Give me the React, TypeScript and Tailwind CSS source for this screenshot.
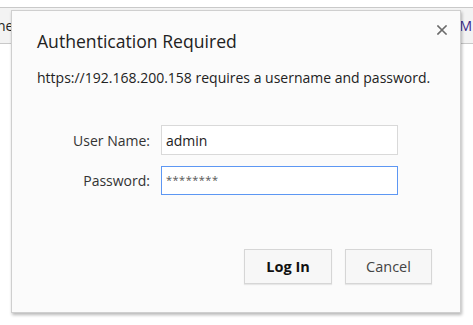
import React from "react";

const font = { fontFamily: '"Open Sans", "Noto Sans", Arial, sans-serif' };

function CloseIcon() {
  return (
    <svg width="10" height="10" viewBox="0 0 10 10" className="text-[#6b6b6b]">
      <path d="M1 1L9 9M9 1L1 9" stroke="currentColor" strokeWidth="1.6" strokeLinecap="square" />
    </svg>
  );
}

export default function App() {
  return (
    <div className="relative h-[325px] w-[473px] overflow-hidden bg-white" style={font}>
      {/* page behind the dialog */}
      <div className="mt-[7px] flex h-[37px] items-center justify-between border-y border-[#c9c9c9] bg-[#f3f3f3] text-[14px] text-[#222]">
        <span className="-ml-[3px]">ne</span>
        <span className="mr-[1px] text-[#3b2a8c]">M</span>
      </div>

      {/* dialog */}
      <div className="absolute left-[11px] top-[10px] flex h-[303px] w-[450px] flex-col border border-[#cfcfcf] bg-[#fbfbfb] pl-[25px] pr-[28px] shadow-[1px_2px_3px_rgba(0,0,0,0.28)]">
        <button className="absolute right-[12px] top-[13px] flex h-[12px] w-[12px] items-center justify-center">
          <CloseIcon />
        </button>
        <h1 className="mt-[18px] text-[17.6px] leading-[24px] text-[#222]">Authentication Required</h1>
        <p className="mt-[15px] whitespace-nowrap text-[14px] leading-[20px] text-[#222]">
          https://192.168.200.158 requires a username and password.
        </p>

        <div className="mt-[37px] grid grid-cols-[113px_237px] items-center gap-x-[11px] gap-y-[11px] text-[14px] text-[#333]">
          <label className="text-right">User Name:</label>
          <div className="flex h-[30px] items-center border border-[#d9d9d9] bg-white px-[4px] text-[#222]">admin</div>
          <label className="text-right">Password:</label>
          <div className="flex h-[29px] items-center border border-[#5d97f3] bg-white px-[4px] text-[11px] tracking-[0.5px] text-[#555]">
            ********
          </div>
        </div>

        <div className="mt-[54px] flex justify-end gap-[13px] text-[14.5px]">
          <button className="h-[35px] w-[88px] border border-[#d6d6d6] bg-[#f7f7f7] font-bold text-[#111] shadow-[0_1px_1px_rgba(0,0,0,0.08)]">
            Log In
          </button>
          <button className="h-[35px] w-[87px] border border-[#d6d6d6] bg-[#f7f7f7] text-[#444] shadow-[0_1px_1px_rgba(0,0,0,0.08)]">
            Cancel
          </button>
        </div>
      </div>
    </div>
  );
}
